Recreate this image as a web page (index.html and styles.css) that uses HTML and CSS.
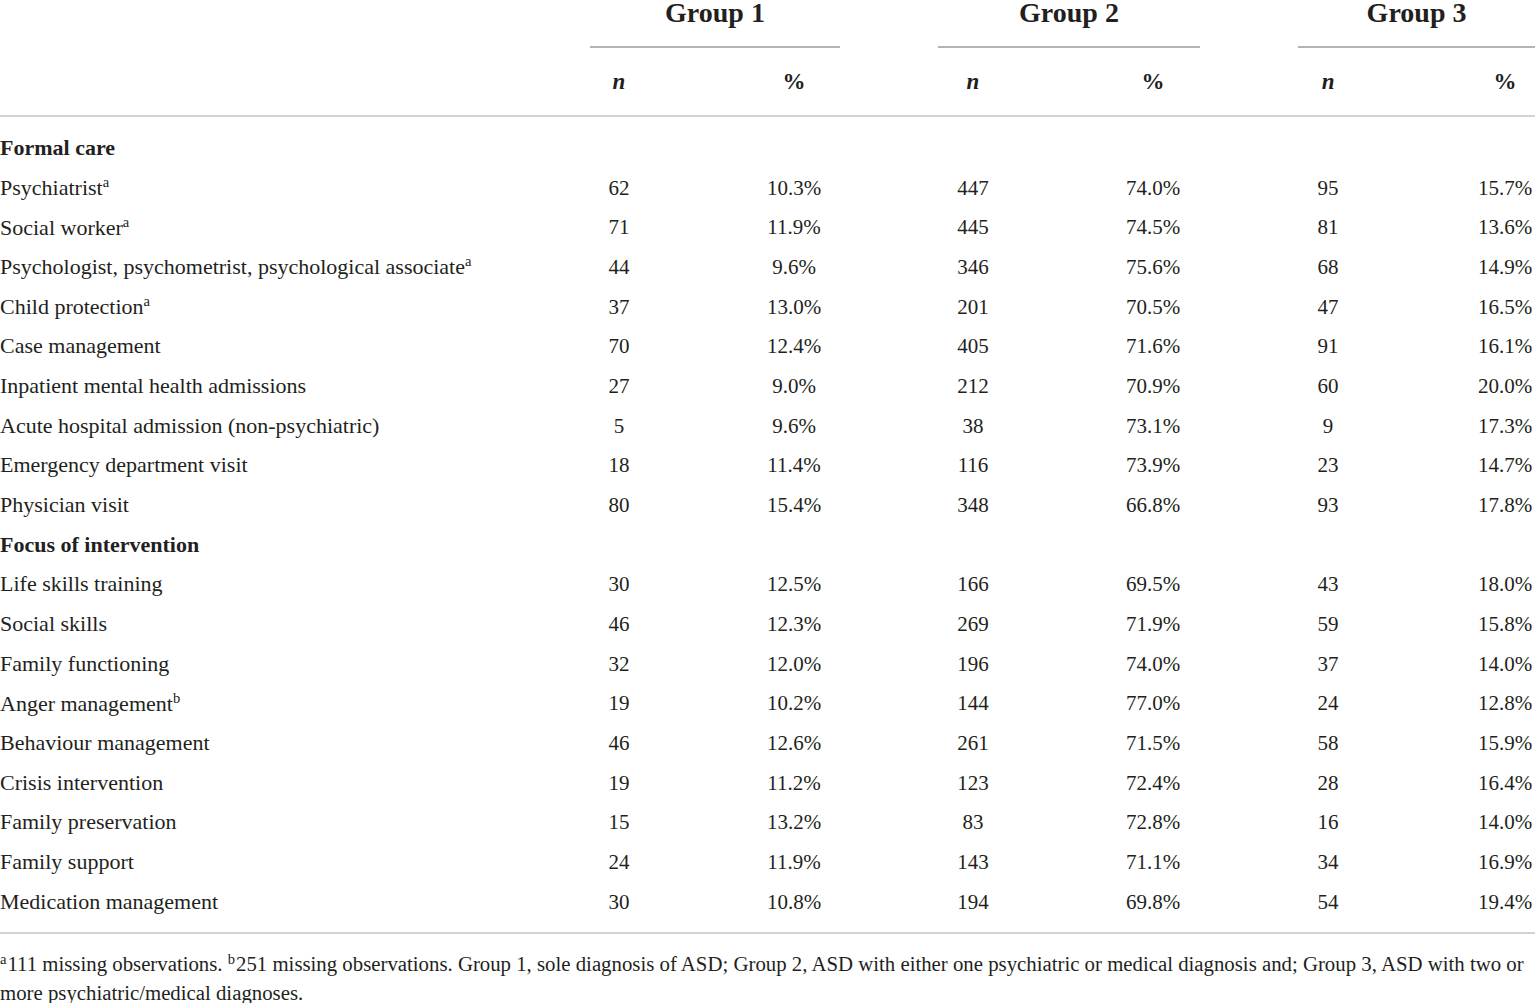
FILE: index.html
```html
<!DOCTYPE html>
<html lang="en">
<head>
<meta charset="utf-8">
<title>Table</title>
<link rel="stylesheet" href="styles.css">
</head>
<body>
<div class="page">
<table class="data">
  <colgroup>
    <col class="c-label"><col class="c-g1n"><col class="c-g1p"><col class="c-g2n"><col class="c-g2p"><col class="c-g3n"><col class="c-g3p">
  </colgroup>
  <thead>
    <tr class="group-row">
      <th></th>
      <th colspan="2"><div class="group g1">Group 1</div></th>
      <th colspan="2"><div class="group g2">Group 2</div></th>
      <th colspan="2"><div class="group g3">Group 3</div></th>
    </tr>
    <tr class="sub-row">
      <th></th>
      <th><i>n</i></th><th>%</th>
      <th><i>n</i></th><th>%</th>
      <th><i>n</i></th><th>%</th>
    </tr>
  </thead>
  <tbody>
    <tr class="section first"><td>Formal care</td><td></td><td></td><td></td><td></td><td></td><td></td></tr>
    <tr><td>Psychiatrist<sup>a</sup></td><td>62</td><td>10.3%</td><td>447</td><td>74.0%</td><td>95</td><td>15.7%</td></tr>
    <tr><td>Social worker<sup>a</sup></td><td>71</td><td>11.9%</td><td>445</td><td>74.5%</td><td>81</td><td>13.6%</td></tr>
    <tr><td>Psychologist, psychometrist, psychological associate<sup>a</sup></td><td>44</td><td>9.6%</td><td>346</td><td>75.6%</td><td>68</td><td>14.9%</td></tr>
    <tr><td>Child protection<sup>a</sup></td><td>37</td><td>13.0%</td><td>201</td><td>70.5%</td><td>47</td><td>16.5%</td></tr>
    <tr><td>Case management</td><td>70</td><td>12.4%</td><td>405</td><td>71.6%</td><td>91</td><td>16.1%</td></tr>
    <tr><td>Inpatient mental health admissions</td><td>27</td><td>9.0%</td><td>212</td><td>70.9%</td><td>60</td><td>20.0%</td></tr>
    <tr><td>Acute hospital admission (non-psychiatric)</td><td>5</td><td>9.6%</td><td>38</td><td>73.1%</td><td>9</td><td>17.3%</td></tr>
    <tr><td>Emergency department visit</td><td>18</td><td>11.4%</td><td>116</td><td>73.9%</td><td>23</td><td>14.7%</td></tr>
    <tr><td>Physician visit</td><td>80</td><td>15.4%</td><td>348</td><td>66.8%</td><td>93</td><td>17.8%</td></tr>
    <tr class="section"><td>Focus of intervention</td><td></td><td></td><td></td><td></td><td></td><td></td></tr>
    <tr><td>Life skills training</td><td>30</td><td>12.5%</td><td>166</td><td>69.5%</td><td>43</td><td>18.0%</td></tr>
    <tr><td>Social skills</td><td>46</td><td>12.3%</td><td>269</td><td>71.9%</td><td>59</td><td>15.8%</td></tr>
    <tr><td>Family functioning</td><td>32</td><td>12.0%</td><td>196</td><td>74.0%</td><td>37</td><td>14.0%</td></tr>
    <tr><td>Anger management<sup>b</sup></td><td>19</td><td>10.2%</td><td>144</td><td>77.0%</td><td>24</td><td>12.8%</td></tr>
    <tr><td>Behaviour management</td><td>46</td><td>12.6%</td><td>261</td><td>71.5%</td><td>58</td><td>15.9%</td></tr>
    <tr><td>Crisis intervention</td><td>19</td><td>11.2%</td><td>123</td><td>72.4%</td><td>28</td><td>16.4%</td></tr>
    <tr><td>Family preservation</td><td>15</td><td>13.2%</td><td>83</td><td>72.8%</td><td>16</td><td>14.0%</td></tr>
    <tr><td>Family support</td><td>24</td><td>11.9%</td><td>143</td><td>71.1%</td><td>34</td><td>16.9%</td></tr>
    <tr class="last"><td>Medication management</td><td>30</td><td>10.8%</td><td>194</td><td>69.8%</td><td>54</td><td>19.4%</td></tr>
  </tbody>
</table>
<p class="foot"><sup>a</sup>111 missing observations. <sup>b</sup>251 missing observations. Group 1, sole diagnosis of ASD; Group 2, ASD with either one psychiatric or medical diagnosis and; Group 3, ASD with two or more psychiatric/medical diagnoses.</p>
</div>
</body>
</html>
```
FILE: styles.css
```css
html, body {
  margin: 0;
  padding: 0;
  background: #ffffff;
  overflow: hidden;
}
.page {
  width: 1535px;
  color: #231f20;
  font-family: "Liberation Serif", "Times New Roman", serif;
}
.data {
  border-collapse: collapse;
  table-layout: fixed;
  width: 1624px;
  font-size: 21px;
}
.c-label { width: 560px; }
.c-g1n { width: 118px; }
.c-g1p { width: 232px; }
.c-g2n { width: 126px; }
.c-g2p { width: 234px; }
.c-g3n { width: 116px; }
.c-g3p { width: 238px; }

.data th, .data td {
  padding: 0;
  text-align: center;
  white-space: nowrap;
}
.data td:first-child {
  text-align: left;
  font-size: 22px;
}

.group-row th { vertical-align: top; }
.group {
  font-size: 28px;
  font-weight: bold;
  line-height: 26px;
  padding-bottom: 20px;
  border-bottom: 2px solid #b4b4b4;
}
.g1 { margin: 0 70px 0 30px; }
.g2 { margin: 0 70px 0 28px; }
.g3 { margin: 0 89px 0 28px; }

.sub-row th {
  height: 67px;
  font-weight: bold;
  font-size: 23px;
  border-bottom: 2px solid #d2d2d2;
}
.data td {
  height: 39.68px;
  line-height: 24px;
}
.section td:first-child { font-weight: bold; }
.first td { padding-top: 11px; }
.last td { padding-bottom: 11px; border-bottom: 2px solid #d2d2d2; }

sup {
  font-size: 0.66em;
  vertical-align: super;
  line-height: 1;
}
.foot {
  width: 1535px;
  margin: 15px 0 0;
  font-size: 20.8px;
  line-height: 29px;
}
.foot sup {
  font-size: 0.7em;
  margin-right: 1px;
}
```
